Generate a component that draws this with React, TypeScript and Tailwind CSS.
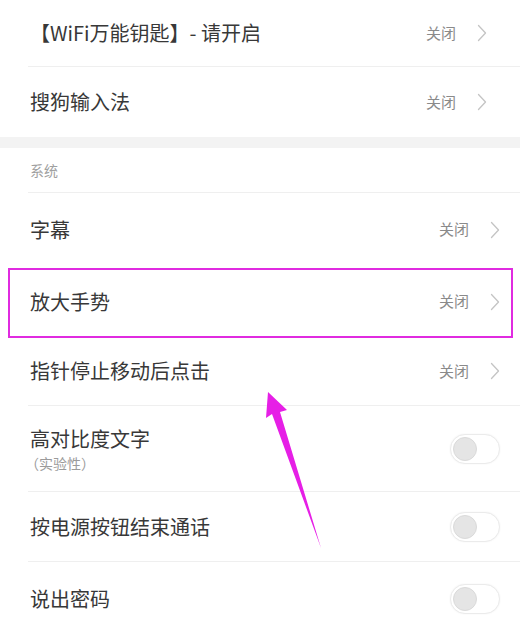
import React from 'react';

const font = { fontFamily: '"Noto Sans CJK SC", "Noto Sans", sans-serif' };

const Chevron = () => (
  <svg width="10" height="18" viewBox="0 0 10 18" fill="none">
    <polyline points="1.5,1.5 8.5,9 1.5,16.5" stroke="#c4c4c4" strokeWidth="1.3" strokeLinecap="round" strokeLinejoin="round" />
  </svg>
);

const Toggle = () => (
  <div className="flex h-[30px] w-[50px] items-center rounded-full border border-[#ebebeb] bg-white pl-[2px] shadow-[0_0_2px_rgba(0,0,0,0.06)]">
    <div className="h-[24px] w-[24px] rounded-full border border-[#dadada] bg-[#e5e5e5]" />
  </div>
);

const NavRow = ({ label, h, pr, divider = true }: { label: string; h: string; pr: string; divider?: boolean }) => (
  <div className={`ml-[28px] flex items-center justify-between pl-[2px] ${h} ${pr} ${divider ? 'border-b border-[#efefef]' : ''}`}>
    <span className="text-[20px] text-[#383838]">{label}</span>
    <div className="flex items-center gap-[21px]">
      <span className="text-[15px] text-[#8a8a8a]">关闭</span>
      <Chevron />
    </div>
  </div>
);

export default function App() {
  return (
    <div className="relative h-[629px] w-[520px] overflow-hidden bg-white" style={font}>
      <NavRow label="【WiFi万能钥匙】- 请开启" h="h-[67px]" pr="pr-[33px]" />
      <NavRow label="搜狗输入法" h="h-[70px]" pr="pr-[33px]" divider={false} />
      <div className="h-[11px] bg-[#f3f3f3]" />

      <div className="ml-[28px] flex h-[45px] items-center border-b border-[#efefef] pl-[2px]">
        <span className="text-[14px] text-[#a0a0a0]">系统</span>
      </div>
      <NavRow label="字幕" h="h-[73px]" pr="pr-[20px]" divider={false} />
      <NavRow label="放大手势" h="h-[71px]" pr="pr-[20px]" divider={false} />
      <NavRow label="指针停止移动后点击" h="h-[69px]" pr="pr-[20px]" />

      <div className="ml-[28px] flex h-[86px] items-center justify-between border-b border-[#efefef] pl-[2px] pr-[20px]">
        <div className="flex flex-col">
          <span className="text-[20px] leading-[28px] text-[#383838]">高对比度文字</span>
          <span className="-ml-[5px] text-[14px] leading-[20px] text-[#9b9b9b]">（实验性）</span>
        </div>
        <Toggle />
      </div>
      <div className="ml-[28px] flex h-[70px] items-center justify-between border-b border-[#efefef] pl-[2px] pr-[20px]">
        <span className="text-[20px] text-[#383838]">按电源按钮结束通话</span>
        <Toggle />
      </div>
      <div className="ml-[28px] flex h-[74px] items-center justify-between pl-[2px] pr-[20px]">
        <span className="text-[20px] text-[#383838]">说出密码</span>
        <Toggle />
      </div>

      {/* annotation box */}
      <div className="absolute left-[8px] top-[268px] h-[70px] w-[505px] border-2 border-[#e02be0]" />

      {/* annotation arrow */}
      <svg className="absolute left-0 top-0" width="520" height="629" viewBox="0 0 520 629">
        <polygon points="268,392 287,410 280,412 321,548 272,414 266,418" fill="#e61fe6" />
      </svg>
    </div>
  );
}
